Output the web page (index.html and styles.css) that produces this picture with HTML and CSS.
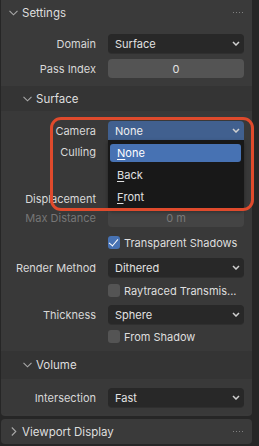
FILE: index.html
```html
<!DOCTYPE html>
<html>
<head>
<link rel="stylesheet" href="styles.css">
</head>
<body>

<div class="editor">

  <div class="panel settings">
    <div class="panel-head">
      <svg class="chev" width="9" height="6" viewBox="0 0 9 6"><path d="M0.5 0.8 L4.5 4.8 L8.5 0.8" /></svg>
      <span class="title">Settings</span>
      <span class="grip"></span>
    </div>

    <div class="panel-body top">
      <div class="row">
        <div class="label">Domain</div>
        <div class="field menu">Surface<svg class="arrow" width="8" height="5" viewBox="0 0 8 5"><path d="M1 1 L4 4 L7 1" /></svg></div>
      </div>
      <div class="row gap6">
        <div class="label">Pass Index</div>
        <div class="field number">0</div>
      </div>
    </div>

    <div class="sub-head first">
      <svg class="chev" width="9" height="6" viewBox="0 0 9 6"><path d="M0.5 0.8 L4.5 4.8 L8.5 0.8" /></svg>
      <span class="title">Surface</span>
    </div>
    <div class="sub-body surface">
      <div class="row">
        <div class="label">Camera</div>
        <div class="field menu open">None<svg class="arrow" width="8" height="5" viewBox="0 0 8 5"><path d="M1 1 L4 4 L7 1" /></svg>
          <div class="popup">
            <div class="item active"><u>N</u>one</div>
            <div class="item"><u>B</u>ack</div>
            <div class="item"><u>F</u>ront</div>
          </div>
        </div>
      </div>
      <div class="row gap2">
        <div class="label">Culling</div>
        <div class="check-wrap"><span class="box on"></span></div>
      </div>
      <div class="row gap4">
        <div class="label"></div>
        <div class="check-wrap"><span class="box"></span></div>
      </div>
      <div class="row gap5">
        <div class="label">Displacement</div>
        <div class="field menu"></div>
      </div>
      <div class="row">
        <div class="label dim">Max Distance</div>
        <div class="field number off">0 m</div>
      </div>
      <div class="row gap6">
        <div class="label"></div>
        <div class="check-wrap"><span class="box on"></span><span>Transparent Shadows</span></div>
      </div>
      <div class="row gap6">
        <div class="label">Render Method</div>
        <div class="field menu">Dithered<svg class="arrow" width="8" height="5" viewBox="0 0 8 5"><path d="M1 1 L4 4 L7 1" /></svg></div>
      </div>
      <div class="row gap4">
        <div class="label"></div>
        <div class="check-wrap"><span class="box"></span><span>Raytraced Transmis...</span></div>
      </div>
      <div class="row gap5">
        <div class="label">Thickness</div>
        <div class="field menu">Sphere<svg class="arrow" width="8" height="5" viewBox="0 0 8 5"><path d="M1 1 L4 4 L7 1" /></svg></div>
      </div>
      <div class="row gap3">
        <div class="label"></div>
        <div class="check-wrap"><span class="box"></span><span>From Shadow</span></div>
      </div>
    </div>

    <div class="sub-head">
      <svg class="chev" width="9" height="6" viewBox="0 0 9 6"><path d="M0.5 0.8 L4.5 4.8 L8.5 0.8" /></svg>
      <span class="title">Volume</span>
    </div>
    <div class="sub-body volume">
      <div class="row">
        <div class="label">Intersection</div>
        <div class="field menu">Fast<svg class="arrow" width="8" height="5" viewBox="0 0 8 5"><path d="M1 1 L4 4 L7 1" /></svg></div>
      </div>
    </div>
  </div>

  <div class="panel closed">
    <div class="panel-head">
      <svg class="chev" width="6" height="9" viewBox="0 0 6 9"><path d="M0.8 0.5 L4.8 4.5 L0.8 8.5" /></svg>
      <span class="title">Viewport Display</span>
      <span class="grip"></span>
    </div>
  </div>

  <div class="callout"></div>
</div>

</body>
</html>
```

FILE: styles.css
```css
body {
	margin: 0;
	background-color: #232323;
	font-family: Inter, "Noto Sans", sans-serif;
	font-size: 11px;
	color: #dddddd;
}

.editor {
	position: relative;
	width: 259px;
	height: 446px;
	overflow: hidden;
	background-color: #262626;
}

.panel {
	width: 251px;
	margin-left: 1px;
	background-color: #3a3a3a;
	border-radius: 4px;
}

.settings {
	margin-top: -4px;
	padding-top: 4px;
	padding-bottom: 2px;
}

.closed {
	margin-top: 3px;
}

.panel-head {
	height: 26px;
	display: flex;
	align-items: center;
	padding-left: 8px;
}

.closed .panel-head {
	height: 25px;
	padding-left: 10px;
}

.chev {
	fill: none;
	stroke: #a8a8a8;
	stroke-width: 1.1;
}

.title {
	margin-left: 4px;
	color: #dedede;
	font-size: 11.5px;
	flex: 1;
}

.closed .title {
	margin-left: 5px;
}

.grip {
	width: 11px;
	height: 4px;
	margin-right: 9px;
	background-image: radial-gradient(circle, #808080 0.8px, transparent 1px);
	background-size: 3px 3px;
}

.panel-body.top {
	padding-top: 8px;
	padding-bottom: 8px;
}

.sub-head {
	height: 25px;
	display: flex;
	align-items: center;
	padding-left: 22px;
	background-color: #343434;
}

.sub-head + .sub-body + .sub-head {
	height: 28px;
}

.sub-body {
	background-color: #393939;
	border-radius: 0 0 4px 4px;
}

.surface {
	padding-top: 10px;
	padding-bottom: 5px;
}

.volume {
	padding-top: 9px;
	padding-bottom: 7px;
}

.row {
	display: flex;
	align-items: center;
	height: 19px;
}

.gap2 { margin-top: 2px; }
.gap3 { margin-top: 3px; }
.gap4 { margin-top: 4px; }
.gap5 { margin-top: 5px; }
.gap6 { margin-top: 6px; }

.label {
	width: 95px;
	text-align: right;
	margin-right: 12px;
	color: #d8d8d8;
	white-space: nowrap;
}

.label.dim {
	color: #767676;
}

.field {
	position: relative;
	width: 136px;
	height: 19px;
	box-sizing: border-box;
	border-radius: 4px;
	display: flex;
	align-items: center;
	color: #e2e2e2;
}

.menu {
	background-color: #282828;
	padding-left: 7px;
	box-shadow: 0 1px 0 #2f2f2f;
}

.menu.open {
	background-color: #41608f;
	border-radius: 4px 4px 0 0;
	color: #f0f0f0;
}

.arrow {
	position: absolute;
	right: 4px;
	top: 7px;
	fill: none;
	stroke: #d0d0d0;
	stroke-width: 1.5;
}

.number {
	background-color: #545454;
	justify-content: center;
}

.number.off {
	background-color: #444444;
	color: #7a7a7a;
}

.check-wrap {
	display: flex;
	align-items: center;
	color: #dedede;
	white-space: nowrap;
}

.box {
	width: 12px;
	height: 13px;
	border-radius: 3px;
	background-color: #545454;
	margin-right: 4px;
	position: relative;
}

.box.on {
	background-color: #4772b3;
}

.box.on::after {
	content: "";
	position: absolute;
	left: 3px;
	top: 1px;
	width: 4px;
	height: 8px;
	border-right: 1.6px solid #ffffff;
	border-bottom: 1.6px solid #ffffff;
	transform: rotate(40deg);
}

.popup {
	position: absolute;
	left: 0;
	top: 19px;
	width: 136px;
	height: 70px;
	box-sizing: border-box;
	padding: 4px 3px 0 2px;
	background-color: #181818;
	border-radius: 0 0 4px 4px;
	box-shadow: 0 2px 4px rgba(0, 0, 0, 0.35);
	z-index: 2;
}

.item {
	height: 18px;
	margin-bottom: 4px;
	padding-left: 7px;
	display: flex;
	align-items: center;
	border-radius: 3px;
	color: #e0e0e0;
}

.item.active {
	background-color: #4772b3;
	color: #ffffff;
}

.item u {
	text-decoration-thickness: 1px;
	text-underline-offset: 2px;
}

.callout {
	position: absolute;
	left: 50px;
	top: 117px;
	width: 204px;
	height: 94px;
	box-sizing: border-box;
	border: 3px solid #df4a2c;
	border-radius: 11px;
	z-index: 3;
}
```
